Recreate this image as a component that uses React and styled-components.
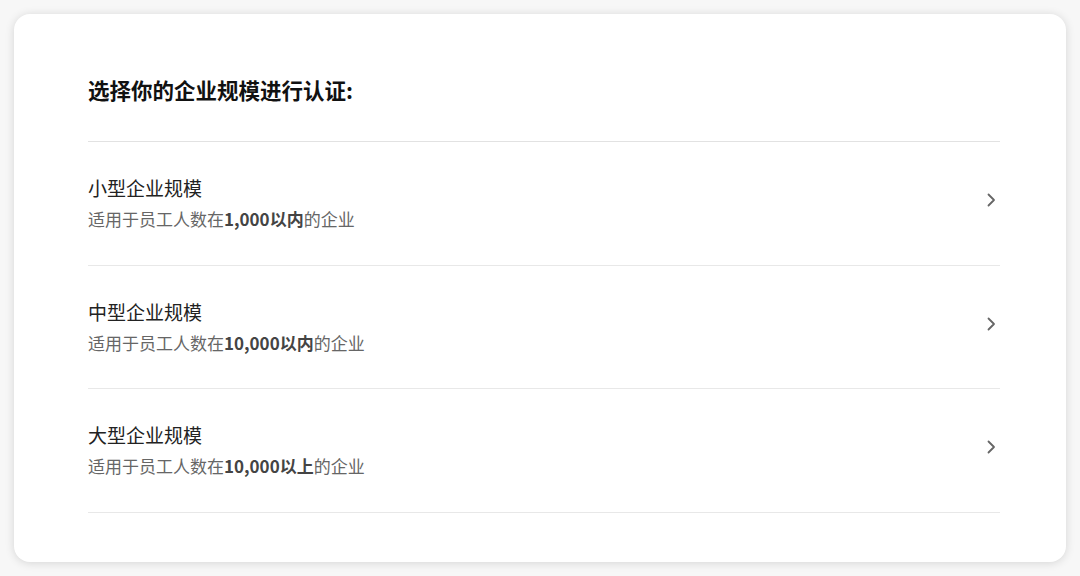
import React from "react";
import styled, { createGlobalStyle } from "styled-components";

const GlobalStyle = createGlobalStyle`
  html, body {
    margin: 0;
    padding: 0;
    background: #f7f7f7;
    font-family: "Noto Sans CJK SC", "Noto Sans", sans-serif;
  }
  * {
    box-sizing: border-box;
  }
`;

const levels = [
  { name: "小型企业规模", limit: "1,000以内" },
  { name: "中型企业规模", limit: "10,000以内" },
  { name: "大型企业规模", limit: "10,000以上" },
];

const Chevron = () => (
  <svg width="12" height="14" viewBox="0 0 12 14" fill="none">
    <polyline
      points="3.5,1.5 9,7 3.5,12.5"
      stroke="#666"
      strokeWidth="1.8"
      strokeLinecap="round"
      strokeLinejoin="round"
    />
  </svg>
);

const App = () => {
  return (
    <>
      <GlobalStyle />
      <Page>
        <Card>
          <Header>选择你的企业规模进行认证:</Header>
          {levels.map((item) => (
            <Row key={item.name}>
              <Text>
                <Title>{item.name}</Title>
                <Sub>
                  适用于员工人数在<strong>{item.limit}</strong>的企业
                </Sub>
              </Text>
              <Arrow>
                <Chevron />
              </Arrow>
            </Row>
          ))}
        </Card>
      </Page>
    </>
  );
};

export default App;

const Page = styled.div`
  width: 1080px;
  height: 576px;
  padding: 14px;
`;

const Card = styled.div`
  height: 548px;
  background: #fff;
  border-radius: 16px;
  box-shadow: 0 1px 10px rgba(0, 0, 0, 0.14);
  padding: 0 66px 0 74px;
`;

const Header = styled.div`
  height: 128px;
  padding-top: 24px;
  display: flex;
  align-items: center;
  font-size: 21.5px;
  font-weight: 700;
  color: #111;
  border-bottom: 1px solid #e2e2e2;
`;

const Row = styled.div`
  height: 123.5px;
  display: flex;
  align-items: center;
  justify-content: space-between;
  border-bottom: 1px solid #e8e8e8;
`;

const Text = styled.div`
  display: flex;
  flex-direction: column;
  gap: 6px;
`;

const Title = styled.div`
  font-size: 19px;
  line-height: 26px;
  color: #222;
`;

const Sub = styled.div`
  font-size: 17px;
  line-height: 24px;
  color: #666;

  strong {
    font-weight: 700;
    color: #444;
  }
`;

const Arrow = styled.div`
  display: flex;
  margin-right: 3px;
  margin-bottom: 6px;
`;
